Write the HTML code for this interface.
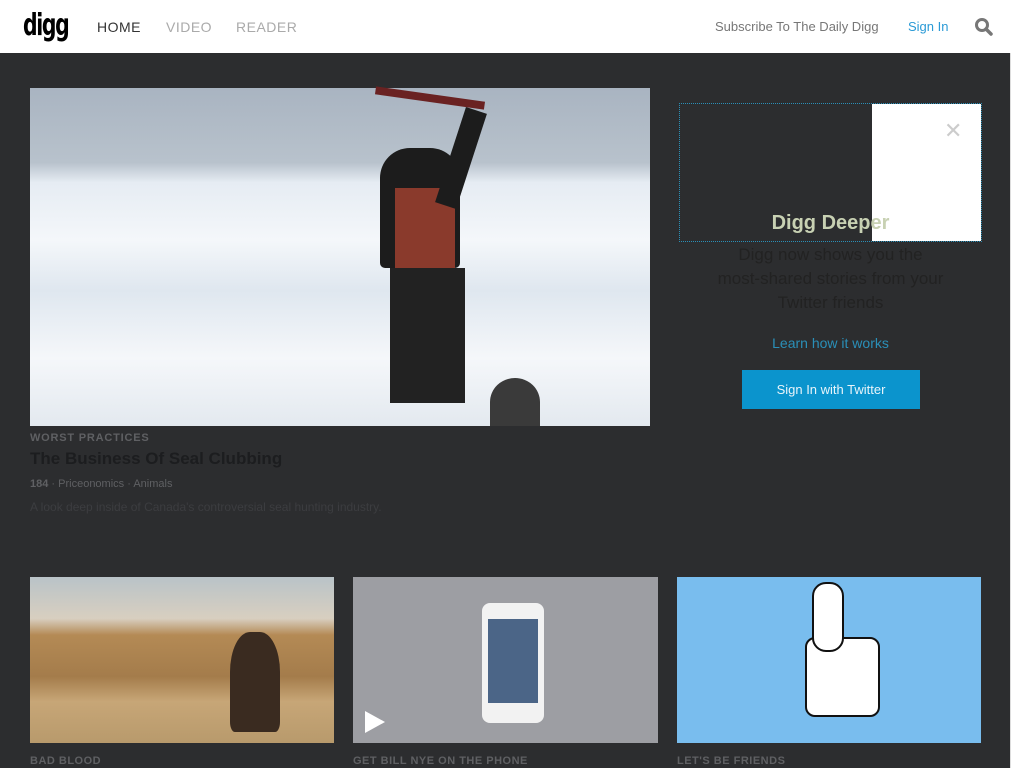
<!DOCTYPE html>
<html><head><meta charset="utf-8"><style>
*{margin:0;padding:0;box-sizing:border-box}
body{width:1024px;height:768px;overflow:hidden;background:#fff;font-family:"Liberation Sans",sans-serif;position:relative}
#page{position:absolute;left:0;top:0;width:1011px;height:768px;background:#2c2d2f;border-right:1px solid #ddd}
#hdr{position:absolute;left:0;top:0;width:1011px;height:53px;background:#fff}
.logo{position:absolute;left:23px;top:12px;font-weight:bold;font-size:30px;letter-spacing:-2px;color:#000;font-family:"DejaVu Sans",sans-serif;line-height:28px;transform:scaleX(0.68);transform-origin:left top}
.nav{position:absolute;top:19px;font-size:14px;letter-spacing:.5px}
.abs{position:absolute}
</style></head><body>
<div id="page">
<div id="hdr">
<div class="logo">digg</div>
<div class="nav" style="left:97px;color:#333">HOME</div>
<div class="nav" style="left:166px;color:#aaa">VIDEO</div>
<div class="nav" style="left:236px;color:#aaa">READER</div>
<div class="nav" style="left:715px;color:#777;font-size:13px;letter-spacing:0">Subscribe To The Daily Digg</div>
<div class="nav" style="left:908px;color:#2a9ad6;font-size:13px;letter-spacing:0">Sign In</div>
<svg class="abs" style="left:974px;top:17px" width="20" height="20" viewBox="0 0 20 20"><circle cx="8" cy="8" r="5.5" stroke="#777" stroke-width="3" fill="none"/><path d="M12 12l5 5" stroke="#777" stroke-width="3.5" stroke-linecap="round"/></svg>
</div>
<div class="abs" style="left:30px;top:88px;width:620px;height:338px;background:linear-gradient(180deg,#a9b4c1 0,#b8c2cc 22%,#e6ecf3 28%,#f4f7fa 45%,#dfe7ef 60%,#f5f7fa 80%,#e3e9ef 100%)">
<div class="abs" style="left:350px;top:60px;width:80px;height:120px;background:#1c1c1c;border-radius:30px 30px 5px 5px"></div>
<div class="abs" style="left:365px;top:100px;width:60px;height:80px;background:#8a3a2c"></div>
<div class="abs" style="left:360px;top:180px;width:75px;height:135px;background:#222"></div>
<div class="abs" style="left:420px;top:20px;width:22px;height:100px;background:#1c1c1c;transform:rotate(18deg)"></div>
<div class="abs" style="left:345px;top:6px;width:110px;height:8px;background:#6a2222;transform:rotate(8deg)"></div>
<div class="abs" style="left:460px;top:290px;width:50px;height:48px;background:#3a3a3a;border-radius:50% 50% 0 0"></div>
</div>
<div class="abs" style="left:30px;top:432px;font-size:11px;font-weight:bold;color:#5f6063;letter-spacing:.8px">WORST PRACTICES</div>
<div class="abs" style="left:30px;top:449px;font-size:17px;font-weight:bold;color:#1c1d1f">The Business Of Seal Clubbing</div>
<div class="abs" style="left:30px;top:478px;font-size:11px;color:#5f6063"><b>184</b> · Priceonomics · Animals</div>
<div class="abs" style="left:30px;top:500px;font-size:12px;color:#3c3d40">A look deep inside of Canada's controversial seal hunting industry.</div>

<div class="abs" style="left:679px;top:103px;width:303px;height:139px;border:1px dotted #2a8fb8"></div>
<div class="abs" style="left:872px;top:104px;width:109px;height:137px;background:#fff"></div>
<div class="abs" style="left:944px;top:120px;font-size:22px;color:#ccc;line-height:22px">✕</div>
<div class="abs" style="left:679px;top:212px;width:303px;text-align:center;font-size:20px;font-weight:bold;color:#c8d1b3">Digg Deeper</div>
<div class="abs" style="left:679px;top:243px;width:303px;text-align:center;font-size:17px;line-height:24px;color:#222;white-space:nowrap">Digg now shows you the<br>most-shared stories from your<br>Twitter friends</div>
<div class="abs" style="left:679px;top:335px;width:303px;text-align:center;font-size:14px;color:#2a8fb8">Learn how it works</div>
<div class="abs" style="left:742px;top:370px;width:178px;height:39px;background:#0b94cd;color:#e8f4fa;font-size:13px;text-align:center;line-height:39px">Sign In with Twitter</div>

<div class="abs" style="left:30px;top:577px;width:304px;height:166px;background:linear-gradient(180deg,#b9c3c8 0,#d8cfc0 25%,#b48a55 35%,#a47c4b 60%,#c7a677 75%,#b89a6c 100%)">
<div class="abs" style="left:200px;top:55px;width:50px;height:100px;background:#3a2b20;border-radius:40% 40% 10% 10%"></div></div>
<div class="abs" style="left:353px;top:577px;width:305px;height:166px;background:#9d9ea3">
<div class="abs" style="left:129px;top:26px;width:62px;height:120px;background:#f2f2f2;border-radius:8px"></div>
<div class="abs" style="left:135px;top:42px;width:50px;height:84px;background:#4b6587"></div>
<div class="abs" style="left:12px;top:134px;width:0;height:0;border-left:20px solid #fff;border-top:11px solid transparent;border-bottom:11px solid transparent"></div></div>
<div class="abs" style="left:677px;top:577px;width:304px;height:166px;background:#79bdee">
<div class="abs" style="left:128px;top:60px;width:75px;height:80px;background:#fff;border:2px solid #111;border-radius:10px"></div>
<div class="abs" style="left:135px;top:5px;width:32px;height:70px;background:#fff;border:2px solid #111;border-radius:14px"></div></div>
<div class="abs" style="left:30px;top:755px;font-size:11px;font-weight:bold;color:#5f6063;letter-spacing:.5px">BAD BLOOD</div>
<div class="abs" style="left:353px;top:755px;font-size:11px;font-weight:bold;color:#5f6063;letter-spacing:.5px">GET BILL NYE ON THE PHONE</div>
<div class="abs" style="left:677px;top:755px;font-size:11px;font-weight:bold;color:#5f6063;letter-spacing:.5px">LET'S BE FRIENDS</div>
</div>
</body></html>
